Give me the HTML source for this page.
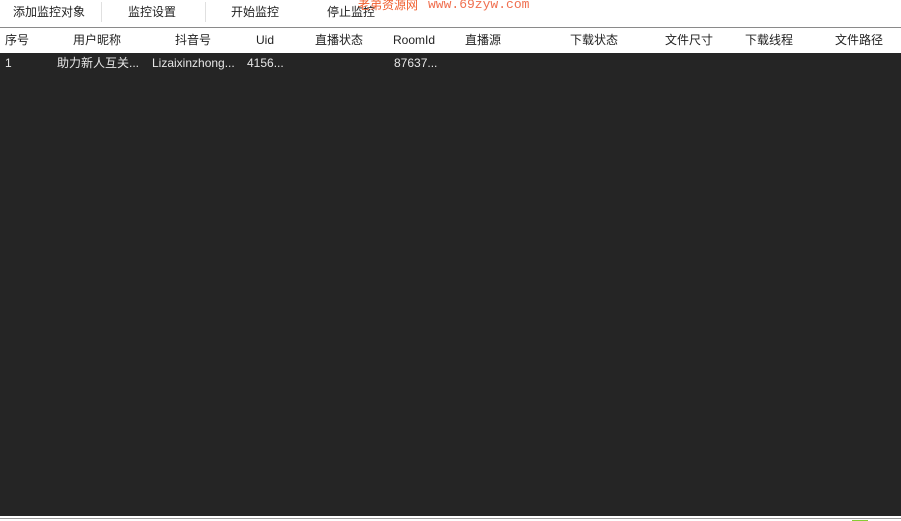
<!DOCTYPE html>
<html><head><meta charset="utf-8"><style>
body{margin:0;width:901px;height:521px;background:#fff;position:relative;overflow:hidden;font-family:"Liberation Sans","Noto Sans CJK SC",sans-serif;font-size:12px;color:#222}
.a{position:absolute;white-space:nowrap;line-height:16px}
.sep{position:absolute;top:2px;width:1px;height:20px;background:#e0e0e0}
#dark{position:absolute;left:0;top:53px;width:901px;height:463px;background:#252525}
.w{color:#e6e6e6}
</style></head><body>
<div class="a" style="left:13px;top:4px">添加监控对象</div>
<div class="sep" style="left:101px"></div>
<div class="a" style="left:128px;top:4px">监控设置</div>
<div class="sep" style="left:205px"></div>
<div class="a" style="left:231px;top:4px">开始监控</div>
<div class="a" style="left:327px;top:4px">停止监控</div>
<div class="a" style="left:358px;top:-3px;color:#f06030;font-size:12px">老弟资源网</div>
<div class="a" style="left:428px;top:-3px;color:#f07050;font-family:'Liberation Mono',monospace;font-size:13px">www.69zyw.com</div>
<div style="position:absolute;left:0;top:27px;width:901px;height:1px;background:#8a8a8a"></div>
<div class="a" style="left:5px;top:32px">序号</div>
<div class="a" style="left:73px;top:32px">用户昵称</div>
<div class="a" style="left:175px;top:32px">抖音号</div>
<div class="a" style="left:256px;top:32px">Uid</div>
<div class="a" style="left:315px;top:32px">直播状态</div>
<div class="a" style="left:393px;top:32px">RoomId</div>
<div class="a" style="left:465px;top:32px">直播源</div>
<div class="a" style="left:570px;top:32px">下载状态</div>
<div class="a" style="left:665px;top:32px">文件尺寸</div>
<div class="a" style="left:745px;top:32px">下载线程</div>
<div class="a" style="left:835px;top:32px">文件路径</div>
<div id="dark"></div>
<div class="a w" style="left:5px;top:55px">1</div>
<div class="a w" style="left:57px;top:55px">助力新人互关...</div>
<div class="a w" style="left:152px;top:55px">Lizaixinzhong...</div>
<div class="a w" style="left:247px;top:55px">4156...</div>
<div class="a w" style="left:394px;top:55px">87637...</div>
<div style="position:absolute;left:0;top:518px;width:901px;height:1px;background:#999"></div>
<div style="position:absolute;left:852px;top:520px;width:16px;height:1px;background:#8c3"></div>
</body></html>
